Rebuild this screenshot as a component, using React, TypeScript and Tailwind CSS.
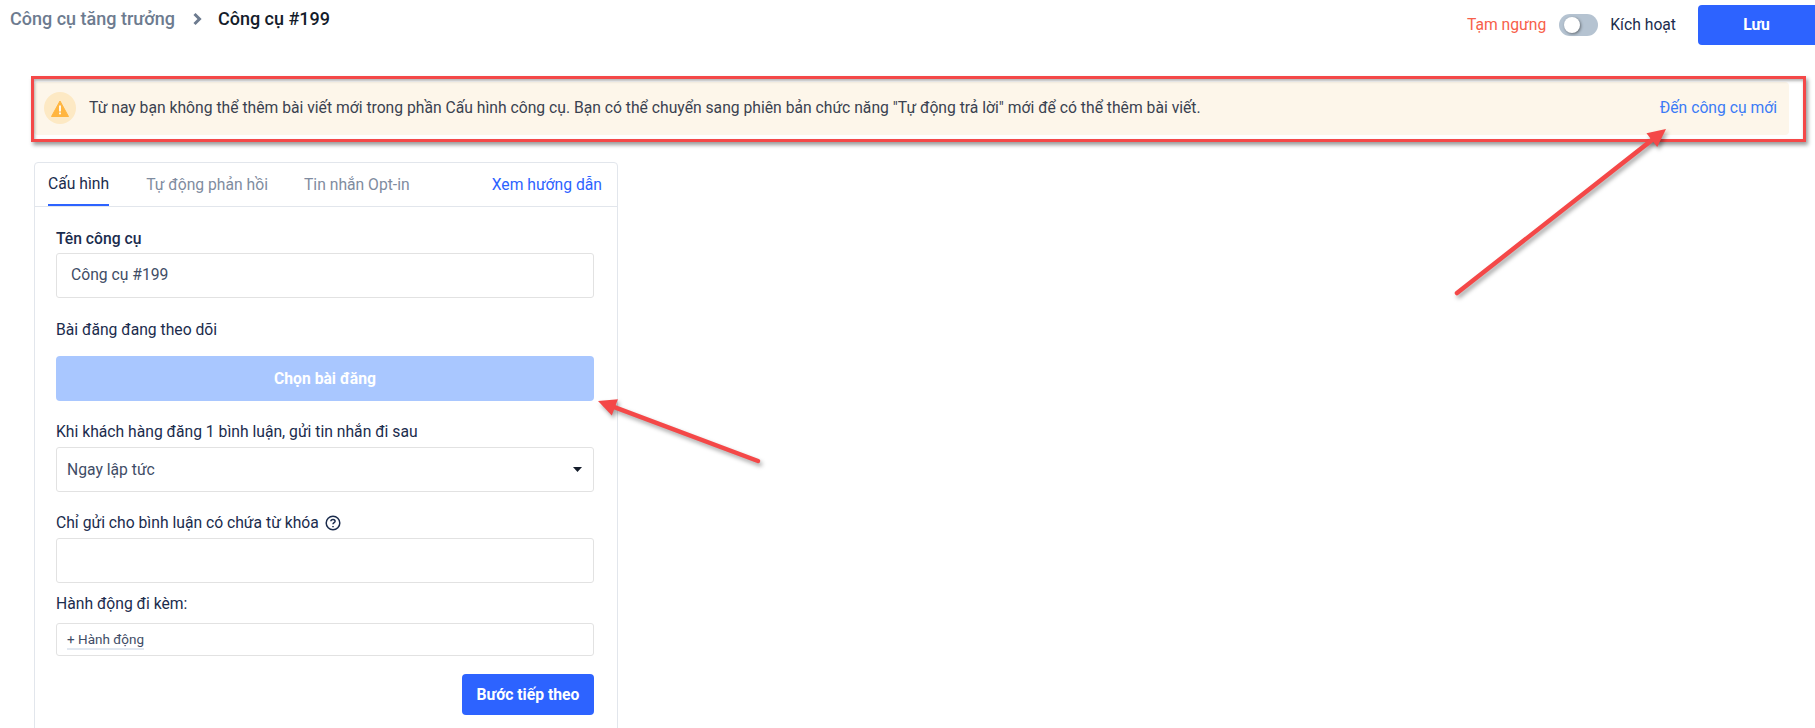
import React from "react";

const Arrow = ({ x1, y1, x2, y2 }: { x1: number; y1: number; x2: number; y2: number }) => {
	const a = Math.atan2(y2 - y1, x2 - x1);
	const len = 20;
	const spread = 0.45;
	const bx = x2 - Math.cos(a) * (len - 4);
	const by = y2 - Math.sin(a) * (len - 4);
	const p1 = `${x2 - Math.cos(a - spread) * len},${y2 - Math.sin(a - spread) * len}`;
	const p2 = `${x2 - Math.cos(a + spread) * len},${y2 - Math.sin(a + spread) * len}`;
	return (
		<g>
			<line x1={x1} y1={y1} x2={bx} y2={by} stroke="#f44848" strokeWidth="4.500" strokeLinecap="round" />
			<polygon points={`${x2},${y2} ${p1} ${p2}`} fill="#f44848" />
		</g>
	);
};

const Label = ({ className, children }: { className: string; children: React.ReactNode }) => (
	<div className={`text-[15.7px] leading-5 text-[#1b2c4d] ${className}`}>{children}</div>
);

export default function App() {
	return (
		<div className="relative h-[728px] w-[1815px] overflow-hidden bg-white font-['Roboto',sans-serif]">
			<header className="flex h-[82px] items-start justify-between">
				<div className="flex h-[37px] items-center pl-[10px] text-[18px] font-medium">
					<span className="text-[#6d7b8f]">Công cụ tăng trưởng</span>
					<svg className="ml-[18px] mr-[16px] h-[14px] w-[9px]" viewBox="0 0 9 14" fill="none">
						<path d="M1.500 2l5 5-5 5" stroke="#6d7b8f" strokeWidth="3" />
					</svg>
					<span className="text-[#141c2b]">Công cụ #199</span>
				</div>
				<div className="flex items-start pt-[5px]">
					<div className="flex h-10 items-center text-[15.7px]">
						<span className="text-[#f7604a]">Tạm ngưng</span>
						<span className="relative ml-[13px] h-[22px] w-[39px] rounded-full bg-[#b5c3d1]">
							<span className="absolute left-[5px] top-[3px] h-4 w-4 rounded-full bg-white shadow-[1px_1px_3px_rgba(0,0,0,0.45)]" />
						</span>
						<span className="ml-3 text-[#1b2c4d]">Kích hoạt</span>
					</div>
					<button className="ml-[22px] h-10 w-[117px] rounded-l-[4px] bg-[#2d63ff] text-[15.7px] font-bold text-white">
						Lưu
					</button>
				</div>
			</header>

			<div className="ml-[34px] flex h-[53px] w-[1755px] items-center rounded-[4px] bg-[#fdf6ea] pb-[1px] pl-[10px] pr-[12px]">
				<div className="flex h-[32px] w-[32px] items-center justify-center rounded-full bg-[#fde9c4]">
					<svg className="h-[17px] w-[18px]" viewBox="0 0 18 17">
						<path d="M9 1l8.500 15.500h-17z" fill="#ffb53f" stroke="#ffb53f" strokeLinejoin="round" />
						<rect x="8.100" y="5.500" width="1.800" height="6" fill="#fff" />
						<rect x="8.100" y="12.500" width="1.800" height="1.800" fill="#fff" />
					</svg>
				</div>
				<p className="ml-[13px] text-[15.7px] text-[#3a4250]">
					Từ nay bạn không thể thêm bài viết mới trong phần Cấu hình công cụ. Bạn có thể chuyển sang phiên bản chức năng "Tự động trả lời" mới để có thể thêm bài viết.
				</p>
				<a className="ml-auto text-[15.7px] text-[#3b7bf6]">Đến công cụ mới</a>
			</div>

			<section className="ml-[34px] mt-[27px] w-[584px] rounded-t-[4px] border border-[#e2e6ec] pb-10">
				<nav className="flex h-[44px] items-center border-b border-[#e2e6ec] pl-[13px] pr-[15px] text-[15.7px]">
					<span className="flex h-full items-center border-b-2 border-[#2d63ff] text-[#1b2c4d]">Cấu hình</span>
					<span className="ml-[37px] text-[#7f8ca0]">Tự động phản hồi</span>
					<span className="ml-[36px] text-[#7f8ca0]">Tin nhắn Opt-in</span>
					<a className="ml-auto text-[#2d63ff]">Xem hướng dẫn</a>
				</nav>
				<form className="flex flex-col pl-[21px] pr-[23px] pt-[22px]">
					<Label className="font-medium">Tên công cụ</Label>
					<div className="mt-1 flex h-[45px] items-center rounded-[3px] border border-[#e2e2e2] pb-[2px] pl-[14px] text-[15.7px] text-[#3f4d66]">
						Công cụ #199
					</div>
					<Label className="mt-[22px]">Bài đăng đang theo dõi</Label>
					<button type="button" className="mt-[16px] h-[45px] rounded-[4px] bg-[#a9c7ff] text-[15.7px] font-bold text-white">
						Chọn bài đăng
					</button>
					<Label className="mt-[21px]">Khi khách hàng đăng 1 bình luận, gửi tin nhắn đi sau</Label>
					<div className="mt-[5px] flex h-[45px] items-center justify-between rounded-[3px] border border-[#e2e2e2] pl-[10px] pr-[11px] text-[15.7px] text-[#3f4d66]">
						Ngay lập tức
						<svg className="h-[5px] w-[9px]" viewBox="0 0 9 5">
							<path d="M0 0h9L4.500 5z" fill="#141c2b" />
						</svg>
					</div>
					<Label className="mt-[21px] flex items-center">
						Chỉ gửi cho bình luận có chứa từ khóa
						<svg className="ml-[6px] h-4 w-4" viewBox="0 0 16 16" fill="none" stroke="#1b2c4d" strokeWidth="1.500">
							<circle cx="8" cy="8" r="6.800" />
							<path d="M5.900 6.300c0-1.200 1-1.900 2.100-1.900s2.100.7 2.100 1.800c0 1.500-2.100 1.500-2.100 3.100" />
							<path d="M8 11v1.300" />
						</svg>
					</Label>
					<div className="mt-[5px] h-[45px] rounded-[3px] border border-[#e2e2e2]" />
					<Label className="mt-[11px]">Hành động đi kèm:</Label>
					<div className="mt-[9px] flex h-[33px] items-center rounded-[3px] border border-[#e2e2e2] pl-[10px]">
						<span className="border-b-2 border-[#e2e8f0] text-[13.500px] leading-[18px] text-[#3f4d66]">+ Hành động</span>
					</div>
					<div className="mt-[18px] flex justify-end">
						<button type="button" className="h-[41px] w-[132px] rounded-[4px] bg-[#2d63ff] text-[15.7px] font-bold text-white">
							Bước tiếp theo
						</button>
					</div>
				</form>
			</section>

			{/* annotation layer */}
			<div className="pointer-events-none absolute left-[31px] top-[76px] h-[66px] w-[1775px] border-[3px] border-[#f44848] shadow-[2px_3px_4px_rgba(0,0,0,0.4),inset_1px_2px_3px_rgba(0,0,0,0.3)]" />
			<svg className="pointer-events-none absolute left-0 top-0 h-[728px] w-[1815px] drop-shadow-[2px_3px_2px_rgba(0,0,0,0.35)]" viewBox="0 0 1815 728" fill="none">
				<Arrow x1={1457} y1={293} x2={1666} y2={129} />
				<Arrow x1={758} y1={461} x2={598} y2={401} />
			</svg>
		</div>
	);
}
